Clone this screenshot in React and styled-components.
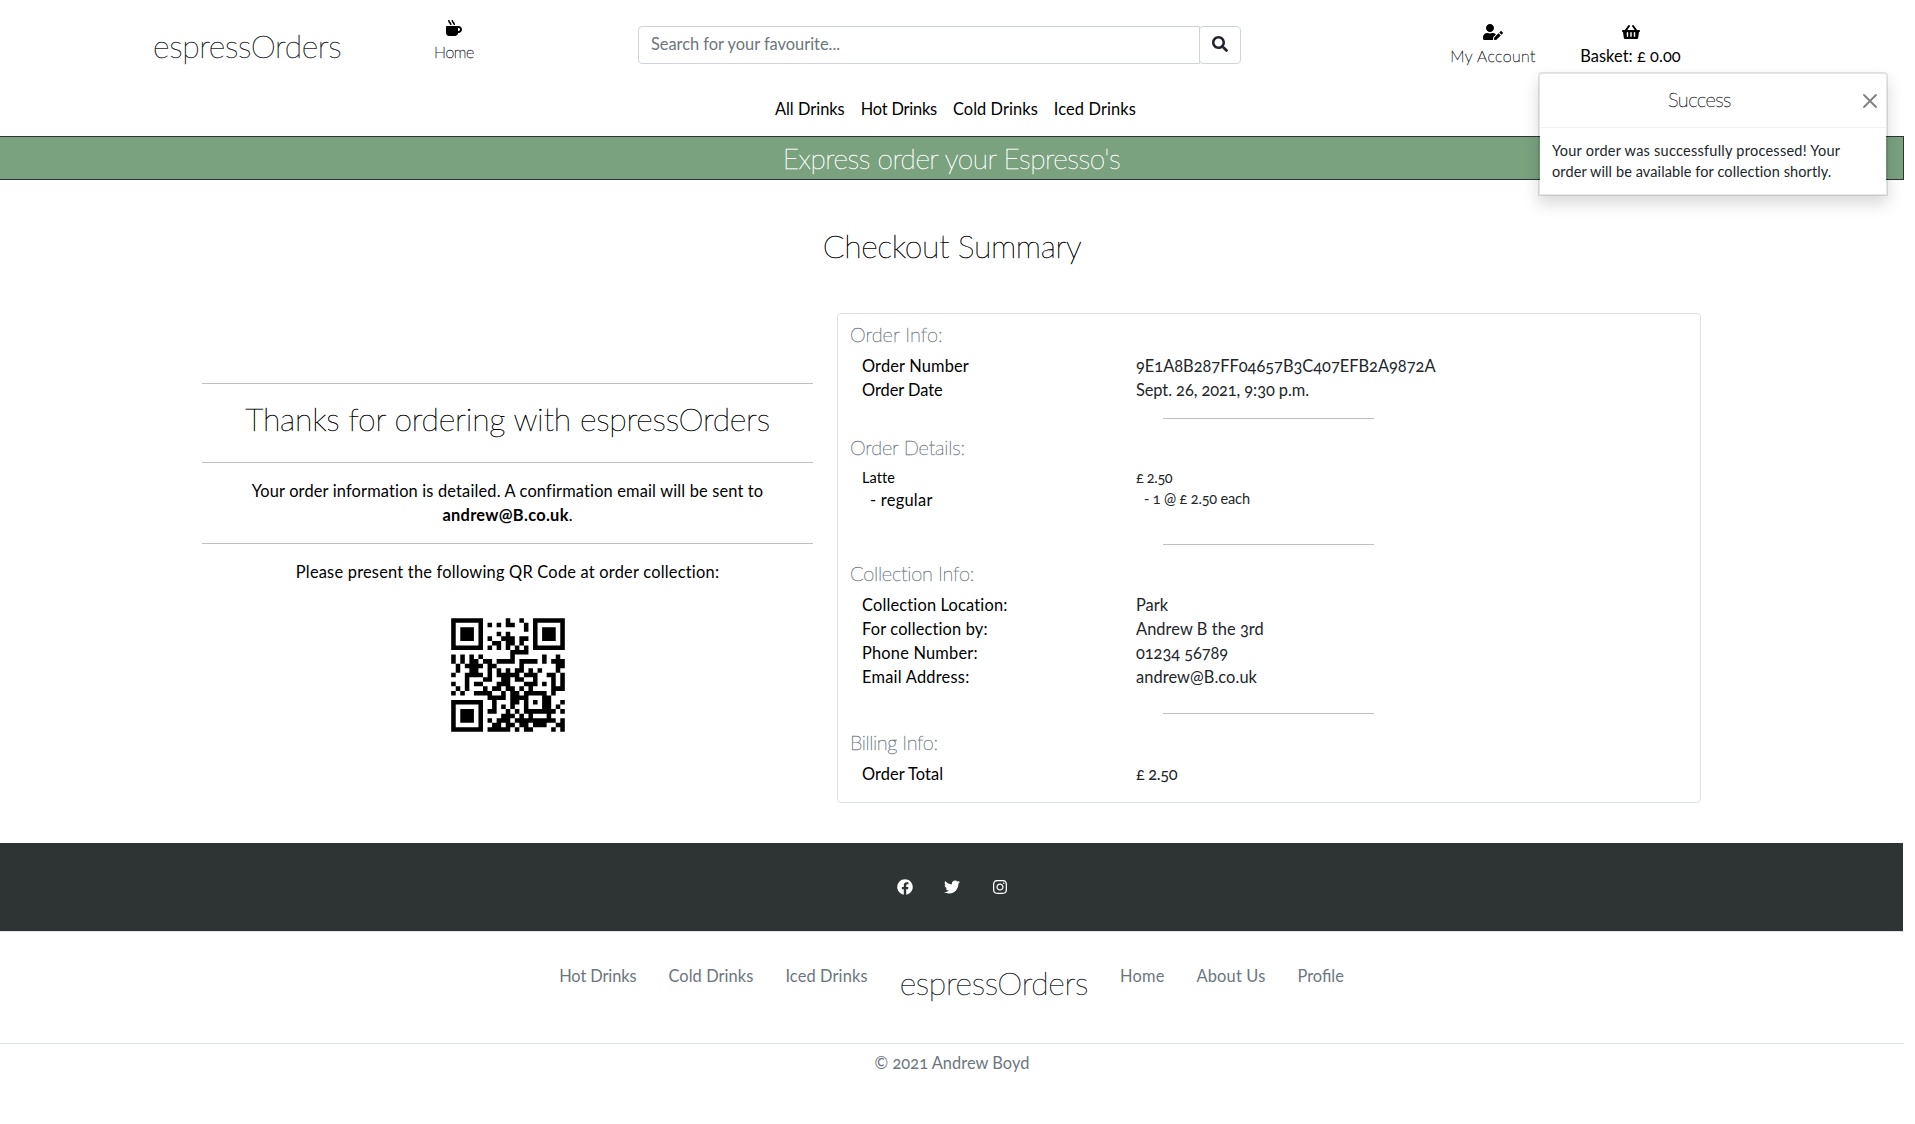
import React from 'react';
import styled, { createGlobalStyle, css } from 'styled-components';
import { FaMugHot, FaUserEdit, FaShoppingBasket, FaSearch, FaFacebook, FaTwitter, FaInstagram } from 'react-icons/fa';

/* ---------- QR code (version 2, level M, alphanumeric, mask 0) ---------- */

const QR_SIZE = 25;
const DATA_WORDS = 28;
const EC_WORDS = 16;
const ALPHABET = '0123456789ABCDEFGHIJKLMNOPQRSTUVWXYZ $%*+-./:';

function gfMultiply(a, b) {
  let r = 0;
  for (let i = 7; i >= 0; i--) {
    r = (r << 1) ^ ((r >> 7) * 0x11d);
    r ^= ((b >> i) & 1) * a;
  }
  return r;
}

function codewords(text) {
  const bits = [];
  const put = (v, n) => {
    for (let i = n - 1; i >= 0; i--) bits.push((v >> i) & 1);
  };
  put(2, 4);
  put(text.length, 9);
  for (let i = 0; i < text.length; i += 2) {
    if (i + 1 < text.length) put(ALPHABET.indexOf(text[i]) * 45 + ALPHABET.indexOf(text[i + 1]), 11);
    else put(ALPHABET.indexOf(text[i]), 6);
  }
  for (let i = 0; i < 4 && bits.length < DATA_WORDS * 8; i++) bits.push(0);
  while (bits.length % 8) bits.push(0);
  const data = [];
  for (let i = 0; i < bits.length; i += 8) data.push(parseInt(bits.slice(i, i + 8).join(''), 2));
  for (let p = 0; data.length < DATA_WORDS; p++) data.push(p % 2 ? 17 : 236);

  const gen = Array(EC_WORDS).fill(0);
  gen[EC_WORDS - 1] = 1;
  let root = 1;
  for (let i = 0; i < EC_WORDS; i++) {
    for (let j = 0; j < EC_WORDS; j++) {
      gen[j] = gfMultiply(gen[j], root);
      if (j + 1 < EC_WORDS) gen[j] ^= gen[j + 1];
    }
    root = gfMultiply(root, 2);
  }
  const ec = Array(EC_WORDS).fill(0);
  for (const b of data) {
    const f = b ^ ec.shift();
    ec.push(0);
    gen.forEach((g, i) => {
      ec[i] ^= gfMultiply(g, f);
    });
  }
  return [...data, ...ec];
}

function qrPath(text) {
  const N = QR_SIZE;
  const words = codewords(text);
  const m = Array.from({ length: N }, () => Array(N).fill(0));
  const fixed = Array.from({ length: N }, () => Array(N).fill(false));
  const set = (x, y, v) => {
    m[y][x] = v ? 1 : 0;
    fixed[y][x] = true;
  };
  for (let i = 0; i < N; i++) {
    set(6, i, i % 2 === 0);
    set(i, 6, i % 2 === 0);
  }
  for (const [cx, cy] of [[3, 3], [N - 4, 3], [3, N - 4]]) {
    for (let dy = -4; dy <= 4; dy++) {
      for (let dx = -4; dx <= 4; dx++) {
        const d = Math.max(Math.abs(dx), Math.abs(dy));
        const x = cx + dx;
        const y = cy + dy;
        if (x >= 0 && x < N && y >= 0 && y < N) set(x, y, d !== 2 && d !== 4);
      }
    }
  }
  for (let dy = -2; dy <= 2; dy++)
    for (let dx = -2; dx <= 2; dx++) set(18 + dx, 18 + dy, Math.max(Math.abs(dx), Math.abs(dy)) !== 1);

  const format = 0x5412;
  const f = (i) => (format >> i) & 1;
  for (let i = 0; i <= 5; i++) set(8, i, f(i));
  set(8, 7, f(6));
  set(8, 8, f(7));
  set(7, 8, f(8));
  for (let i = 9; i < 15; i++) set(14 - i, 8, f(i));
  for (let i = 0; i < 8; i++) set(N - 1 - i, 8, f(i));
  for (let i = 8; i < 15; i++) set(8, N - 15 + i, f(i));
  set(8, N - 8, 1);

  let k = 0;
  for (let r = N - 1; r >= 1; r -= 2) {
    if (r === 6) r = 5;
    for (let v = 0; v < N; v++) {
      for (let j = 0; j < 2; j++) {
        const x = r - j;
        const y = ((r + 1) & 2) === 0 ? N - 1 - v : v;
        if (fixed[y][x]) continue;
        m[y][x] = k < words.length * 8 ? (words[k >> 3] >> (7 - (k & 7))) & 1 : 0;
        if ((x + y) % 2 === 0) m[y][x] ^= 1;
        k++;
      }
    }
  }
  return m.flatMap((row, y) => row.map((v, x) => (v ? `M${x} ${y}h1v1h-1z` : ''))).join('');
}

/* ---------- styles ---------- */

const GlobalStyle = createGlobalStyle`
  *, *::before, *::after { box-sizing: border-box; }
  body {
    margin: 0;
    background: #fff;
    color: #000;
    font: 400 16.4px/24px Lato, "Open Sans", sans-serif;
    font-variant-numeric: oldstyle-nums;
    overflow-x: hidden;
  }
`;

const displayFont = css`
  font-family: Lato, "Open Sans", sans-serif;
  font-weight: 100;
  -webkit-text-stroke: 0.45px currentColor;
`;

const Page = styled.div`
  width: 1904px;
`;

const Txt = styled.span`
  letter-spacing: ${(p) => p.$ls || 0}px;
  white-space: nowrap;
`;

const Header = styled.header`
  display: grid;
  grid-template-columns: 350px 208px 763px 99px 146px 129px;
  height: 97px;
`;

const Brand = styled.a`
  ${displayFont}
  font-size: 32px;
  line-height: 38px;
  letter-spacing: -0.34px;
  white-space: nowrap;
  color: #212529;
`;

const BrandCell = styled.div`
  padding: 27px 0 0 153px;
`;

const IconLink = styled.a`
  display: flex;
  flex-direction: column;
  align-items: center;
  padding-top: ${(p) => p.$top}px;
  grid-column: ${(p) => p.$col};
`;

const IconBox = styled.span`
  display: flex;
  align-items: center;
  height: 24px;
`;

const ThinLabel = styled(Txt)`
  ${displayFont}
  font-size: 16px;
  color: #212529;
`;

const SearchForm = styled.form`
  display: flex;
  justify-self: center;
  width: 603px;
  height: 38px;
  margin-top: 26px;
`;

const SearchField = styled.input`
  flex: 1;
  padding: 0 12px 2px;
  border: 1px solid #ced4da;
  border-radius: 4px 0 0 4px;
  background: #fff;
  font: inherit;
  letter-spacing: -0.01px;
  &::placeholder { color: #6c757d; opacity: 1; }
`;

const SearchButton = styled.button`
  display: flex;
  align-items: center;
  justify-content: center;
  width: 42px;
  margin-left: -1px;
  padding: 0 0 2px;
  border: 1px solid #ced4da;
  border-radius: 4px;
  background: #fff;
  color: #212529;
  font-size: 16px;
`;

const DrinksNav = styled.nav`
  display: flex;
  justify-content: center;
  gap: 16px;
  height: 39px;
  padding-left: 7px;
`;

const Banner = styled.div`
  height: 44px;
  border: 1px solid #2e3434;
  border-left: 0;
  background: #7aa27f;
  color: #fff;
  text-align: center;
  ${displayFont}
  font-size: 28px;
  line-height: 42px;
`;

const PageTitle = styled.h2`
  ${displayFont}
  margin: 47px 0 48px;
  font-size: 32px;
  line-height: 38px;
  text-align: center;
  color: #000;
`;

const Main = styled.main`
  display: flex;
  gap: 24px;
  height: 530px;
  padding-left: 202px;
`;

const Thanks = styled.section`
  width: 611px;
  padding-top: 70px;
  text-align: center;
`;

const ThanksTitle = styled.h3`
  ${displayFont}
  margin: 0 0 24px;
  font-size: 32px;
  line-height: 38px;
`;

const Rule = styled.hr`
  width: ${(p) => p.$w || '100%'};
  height: 1px;
  margin: ${(p) => p.$m || '0 0 16px'};
  border: 0;
  background: #bfbfbf;
`;

const Para = styled.p`
  margin: 0 0 16px;
`;

const QrImage = styled.svg`
  display: block;
  width: 150px;
  height: 150px;
  margin: 0 auto;
`;

const Card = styled.section`
  width: 864px;
  height: 490px;
  padding: 8px 12px;
  border: 1px solid #dee2e6;
  border-radius: 4px;
`;

const SectionTitle = styled.h5`
  ${displayFont}
  margin: 0 0 8px;
  font-size: 20px;
  line-height: 24px;
  color: #6c757d;
`;

const Rows = styled.dl`
  display: grid;
  grid-template-columns: 274px 1fr;
  margin: 0;
  padding: 0 0 ${(p) => p.$pb || 0}px 12px;
`;

const Cell = styled.span`
  padding-left: ${(p) => (p.$indent ? 8 : 0)}px;
  color: ${(p) => (p.$value ? '#212529' : '#000')};
  font-size: ${(p) => (p.$small ? 14.5 : 16.4)}px;
  line-height: ${(p) => (p.$small ? 21 : 24)}px;
  letter-spacing: ${(p) => p.$ls || 0}px;
  white-space: nowrap;
`;

const Social = styled.div`
  display: flex;
  justify-content: center;
  gap: 31.5px;
  width: 1903px;
  height: 88px;
  padding: 36px 0 0 1px;
  background: #2e3434;
  color: #fff;
`;

const FooterNav = styled.nav`
  display: flex;
  justify-content: center;
  gap: 32px;
  height: 113px;
  padding: 32px 1px 0 0;
  border-top: 1px solid #dee2e6;
  border-bottom: 1px solid #dee2e6;
  color: #6c757d;
`;

const Copyright = styled.p`
  margin: 7px 0 0;
  color: #6c757d;
  text-align: center;
`;

const Toast = styled.aside`
  position: absolute;
  top: 72px;
  left: 1538px;
  width: 350px;
  border: 2px solid rgba(0, 0, 0, 0.1);
  border-radius: 4px 4px 0 0;
  background: #fff;
  background-clip: padding-box;
  box-shadow: 0 8px 16px rgba(0, 0, 0, 0.15);
`;

const ToastHead = styled.div`
  display: flex;
  align-items: center;
  height: 54px;
  padding-right: 9px;
  border-bottom: 1px solid #f2f2f2;
`;

const ToastTitle = styled.strong`
  ${displayFont}
  flex: 1;
  padding: 0 4px 3px 0;
  font-size: 20px;
  letter-spacing: -0.5px;
  text-align: center;
  color: #212529;
`;

const ToastBody = styled.div`
  padding: 12px;
  color: #212529;
  font-size: 14.5px;
  line-height: 21px;
`;

/* ---------- content ---------- */

const ORDER_NUMBER = '9E1A8B287FF04657B3C407EFB2A9872A';

const SECTIONS = [
  {
    title: 'Order Info:', ls: 0.03, rule: true,
    rows: [
      ['Order Number', 0.16, ORDER_NUMBER, -0.01],
      ['Order Date', -0.04, 'Sept. 26, 2021, 9:30 p.m.', -0.07],
    ],
  },
  {
    title: 'Order Details:', ls: -0.2, rule: true, pb: 16,
    rows: [
      ['Latte', 0.06, '£ 2.50', -0.35, { small: true, smallValue: true }],
      ['- regular', 0.27, '- 1 @ £ 2.50 each', -0.16, { indent: true, smallValue: true }],
    ],
  },
  {
    title: 'Collection Info:', ls: -0.24, rule: true, pb: 8,
    rows: [
      ['Collection Location:', 0.17, 'Park', 0],
      ['For collection by:', 0.16, 'Andrew B the 3rd', 0.07],
      ['Phone Number:', 0.2, '01234 56789', -0.05],
      ['Email Address:', 0.24, 'andrew@B.co.uk', 0.07],
    ],
  },
  { title: 'Billing Info:', ls: -0.38, rows: [['Order Total', 0.06, '£ 2.50', -0.35]] },
];

function OrderSection({ title, ls, rows, pb, rule }) {
  return (
    <>
      <SectionTitle><Txt $ls={ls}>{title}</Txt></SectionTitle>
      <Rows $pb={pb}>
        {rows.map(([label, labelLs, value, valueLs, o = {}]) => (
          <React.Fragment key={label}>
            <Cell as="dt" $ls={labelLs} $small={o.small} $indent={o.indent}>{label}</Cell>
            <Value $ls={valueLs} $small={o.smallValue} $indent={o.indent} $value>{value}</Value>
          </React.Fragment>
        ))}
      </Rows>
      {rule && <Rule $w="211px" $m="16px 0 16px 313px" />}
    </>
  );
}

const Value = styled(Cell).attrs({ as: 'dd' })`
  margin: 0;
`;

export default function App() {
  return (
    <Page>
      <GlobalStyle />
      <Header>
        <BrandCell><Brand>espressOrders</Brand></BrandCell>
        <IconLink $top={16} $col={2}>
          <IconBox><FaMugHot size={16} /></IconBox>
          <ThinLabel $ls={-0.4}>Home</ThinLabel>
        </IconLink>
        <SearchForm>
          <SearchField placeholder="Search for your favourite..." />
          <SearchButton type="button"><FaSearch /></SearchButton>
        </SearchForm>
        <IconLink $top={20} $col={5}>
          <IconBox><FaUserEdit size={20} /></IconBox>
          <ThinLabel $ls={0.38}>My Account</ThinLabel>
        </IconLink>
        <IconLink $top={20} $col={6}>
          <IconBox><FaShoppingBasket size={18} /></IconBox>
          <Txt $ls={0.05}>Basket: £ 0.00</Txt>
        </IconLink>
      </Header>
      <DrinksNav>
        <Txt $ls={0}>All Drinks</Txt>
        <Txt $ls={-0.2}>Hot Drinks</Txt>
        <Txt $ls={0.07}>Cold Drinks</Txt>
        <Txt $ls={0.13}>Iced Drinks</Txt>
      </DrinksNav>
      <Banner><Txt $ls={-0.46}>Express order your Espresso's</Txt></Banner>
      <PageTitle><Txt $ls={-0.38}>Checkout Summary</Txt></PageTitle>
      <Main>
        <Thanks>
          <Rule />
          <ThanksTitle><Txt $ls={-0.22}>Thanks for ordering with espressOrders</Txt></ThanksTitle>
          <Rule />
          <Para>
            <Txt $ls={0.16}>Your order information is detailed. A confirmation email will be sent to</Txt>
            <br />
            <Txt as="strong" $ls={0.3}>andrew@B.co.uk</Txt>.
          </Para>
          <Rule />
          <Para><Txt $ls={0.22}>Please present the following QR Code at order collection:</Txt></Para>
          <QrImage viewBox="-4 -4 33 33"><path d={qrPath(ORDER_NUMBER)} /></QrImage>
        </Thanks>
        <Card>
          {SECTIONS.map((s) => <OrderSection key={s.title} {...s} />)}
        </Card>
      </Main>
      <Social>
        <FaFacebook size={16} />
        <FaTwitter size={16} />
        <FaInstagram size={16} />
      </Social>
      <FooterNav>
        <Txt $ls={-0.1}>Hot Drinks</Txt>
        <Txt $ls={0.08}>Cold Drinks</Txt>
        <Txt $ls={0.13}>Iced Drinks</Txt>
        <Brand>espressOrders</Brand>
        <Txt $ls={0.2}>Home</Txt>
        <Txt $ls={0.18}>About Us</Txt>
        <Txt $ls={0}>Profile</Txt>
      </FooterNav>
      <Copyright><Txt $ls={0.04}>© 2021 Andrew Boyd</Txt></Copyright>
      <Toast>
        <ToastHead>
          <ToastTitle>Success</ToastTitle>
          <svg width="14" height="14" viewBox="0 0 14 14" fill="none" stroke="#7f7f7f" strokeWidth="1.8" strokeLinecap="round">
            <path d="M1 1l12 12M13 1L1 13" />
          </svg>
        </ToastHead>
        <ToastBody>
          <Txt $ls={0.25}>Your order was successfully processed! Your</Txt>
          <br />
          <Txt $ls={0.1}>order will be available for collection shortly.</Txt>
        </ToastBody>
      </Toast>
    </Page>
  );
}
